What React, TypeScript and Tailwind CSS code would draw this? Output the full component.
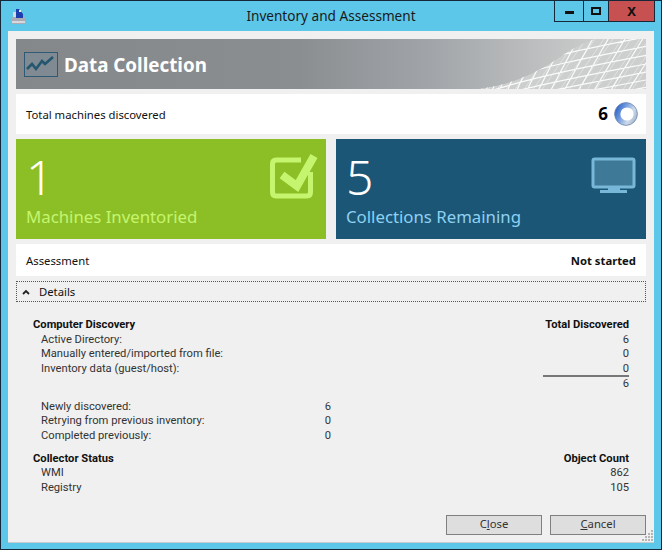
const font = "font-['Noto_Sans','Open_Sans',sans-serif]";

function BannerMesh() {
  // wire mesh in the banner's right corner, coordinates are banner-local
  const edge = "M0 50 C30 46 52 36 72 24 C88 13 100 5 116 0 L167 0 L167 50 Z";
  const thick: string[] = [];
  const thin: string[] = [];
  // rows flatten out toward the right
  for (let i = 0; i < 7; i++) {
    const y = 2 + i * 9.6 - i * i * 0.2;
    thick.push(`M10 ${y + 36 - i * 2} C60 ${y + 16} 120 ${y + 5} 167 ${y - 4}`);
  }
  // columns lean right and spread apart
  let x = 2;
  for (let i = 0; i < 15; i++) {
    thick.push(`M${x} 52 L${x + 18 + i * 1.2} 0`);
    x += 5 + i * 1.05;
  }
  for (let i = 0; i < 22; i++) {
    thin.push(`M${i * 9 - 10} 52 L${i * 9 + 26} 0`);
  }
  return (
    <svg width="167" height="50" viewBox="0 0 167 50" className="absolute right-0 top-0">
      <defs>
        <clipPath id="mesh">
          <path d={edge} />
        </clipPath>
      </defs>
      <g clipPath="url(#mesh)">
        <path d={edge} fill="#cdcece" />
        <path d={thin.join(" ")} fill="none" stroke="#e8e8e8" strokeWidth="0.7" />
        <path d={thick.join(" ")} fill="none" stroke="#fafafa" strokeWidth="1.2" />
      </g>
    </svg>
  );
}

function ChartIcon() {
  return (
    <svg width="34" height="25" viewBox="0 0 34 25" className="shrink-0">
      <rect x="0.5" y="0.5" width="33" height="24" fill="#7f8a92" stroke="#2f5a75" />
      <path d="M3 17 L8 12 L12 17 L18 9 L21 12 L29 5" fill="none" stroke="#24566f" strokeWidth="2.6" />
    </svg>
  );
}

function Ring() {
  return (
    <svg width="24" height="24" viewBox="0 0 24 24">
      <defs>
        <linearGradient id="ring" x1="0" y1="0.1" x2="1" y2="0.6">
          <stop offset="0" stopColor="#1c50bd" />
          <stop offset="0.4" stopColor="#6f9ade" />
          <stop offset="0.75" stopColor="#cfdbea" />
          <stop offset="1" stopColor="#a9b9cf" />
        </linearGradient>
      </defs>
      <circle cx="12" cy="12" r="11.4" fill="url(#ring)" stroke="#6f86ad" strokeWidth="0.8" />
      <circle cx="13" cy="12" r="6.6" fill="#ffffff" />
    </svg>
  );
}

function Row({ label, mid, right, bold }: { label: string; mid?: string; right?: string; bold?: boolean }) {
  return (
    <div className={`flex h-[14.6px] items-center ${bold ? "font-bold text-[#111]" : "pl-2 text-[#333]"}`}>
      <div className="flex w-[290px] shrink-0 justify-between whitespace-nowrap">
        <span>{label}</span>
        {mid && <span>{mid}</span>}
      </div>
      {right && <span className="ml-auto whitespace-nowrap">{right}</span>}
    </div>
  );
}

function Grip() {
  const dots = [
    [10, 0],
    [7, 3],
    [10, 3],
    [4, 6],
    [7, 6],
    [10, 6],
    [1, 9],
    [4, 9],
    [7, 9],
    [10, 9],
  ];
  return (
    <svg width="12" height="11" viewBox="0 0 12 11" className="absolute bottom-[1px] right-[1px]">
      {dots.map(([x, y]) => (
        <rect key={`${x}-${y}`} x={x} y={y} width="2" height="2" fill="#b4b4b4" />
      ))}
    </svg>
  );
}

export default function App() {
  return (
    <div className={`${font} flex h-[550px] w-[662px] flex-col border border-[#15283a] bg-[#5cc7e8] text-[11.3px] text-[#111]`}>
      <div className="grid h-[30px] shrink-0 grid-cols-[1fr_auto_1fr]">
        <div className="pl-[9px] pt-[7px]">
          <svg width="17" height="17" viewBox="0 0 17 17">
            <rect x="2" y="9" width="13" height="7" rx="1" fill="#a9acb4" />
            <rect x="2" y="13" width="13" height="2" fill="#d8d8dc" />
            <path d="M6 1 L9 1 L13 6 L13 10 L6 10 Z" fill="#1d3fae" />
            <rect x="3" y="4" width="3" height="5" fill="#d5d9e2" />
            <rect x="9" y="2" width="2" height="2" fill="#e9edf5" />
          </svg>
        </div>
        <div className="pt-[5px] text-[13.6px] leading-[20px] text-[#1a1a1a]">Inventory and Assessment</div>
        <div className="flex justify-end pr-[6px]">
          <div className="flex h-[21px] w-[30px] items-center justify-center border-x border-b border-[#15283a]">
            <div className="mt-[3px] h-[3px] w-[9px] bg-[#111]" />
          </div>
          <div className="flex h-[21px] w-[25px] items-center justify-center border-r border-b border-[#15283a]">
            <div className="h-[8px] w-[10px] border-2 border-[#111]" />
          </div>
          <div className="flex h-[21px] w-[46px] items-center justify-center border-r border-b border-[#15283a] bg-[#c75050] text-[13px] font-bold leading-none text-[#111]">
            X
          </div>
        </div>
      </div>

      <div className="relative mx-[7px] flex flex-1 flex-col border-b border-[#c8ccd0] bg-[#f0f0f0] px-2 pt-2 pb-[7px]">
        <div className="relative flex h-[50px] shrink-0 items-center gap-[6px] bg-[linear-gradient(90deg,#85888b_0%,#8b8e91_45%,#a0a4a8_65%,#b0b3b5_75%,#c8c9c9_90%,#d4d5d5_100%)] pl-2">
          <ChartIcon />
          <span className="mt-[2px] text-[18.8px] font-bold text-white">Data Collection</span>
          <BannerMesh />
        </div>

        <div className="mt-[5px] flex h-[40px] shrink-0 items-center justify-between bg-white pl-[10px] pr-[8px]">
          <span className="mt-[2px]">Total machines discovered</span>
          <span className="flex items-center gap-[6px]">
            <span className="text-[17px] font-bold text-black">6</span>
            <Ring />
          </span>
        </div>

        <div className="mt-[5px] grid h-[100px] shrink-0 grid-cols-[310px_310px] justify-between">
          <div className="relative bg-[#8cbf26] pl-[10px]">
            <div className="pt-[8px] text-[48px] font-light leading-[60px] text-white">1</div>
            <div className="text-[16.8px] leading-[20px] text-[#c5f56f]">Machines Inventoried</div>
            <svg width="50" height="50" viewBox="0 0 50 50" className="absolute right-[8px] top-[11px]">
              <path
                d="M33 10 H8 Q4.5 10 4.5 14 V42 Q4.5 46 8 46 H39 Q42.5 46 42.5 42 V22"
                fill="none"
                stroke="#c5f56f"
                strokeWidth="5"
              />
              <path d="M14 25 L29 36 L46 6" fill="none" stroke="#c5f56f" strokeWidth="8" />
            </svg>
          </div>
          <div className="relative bg-[#1b5676] pl-[10px]">
            <div className="pt-[8px] text-[48px] font-light leading-[60px] text-white">5</div>
            <div className="text-[16.8px] leading-[20px] text-[#8ed1f1]">Collections Remaining</div>
            <svg width="45" height="37" viewBox="0 0 45 37" className="absolute right-[10px] top-[18px]">
              <rect x="2" y="2" width="41" height="28" rx="1.5" fill="#3f7998" stroke="#78b7d8" strokeWidth="3" />
              <path d="M17 31 H29 V33 H36 V36 H9 V33 H17 Z" fill="#78b7d8" />
            </svg>
          </div>
        </div>

        <div className="mt-[5px] flex h-[32px] shrink-0 items-center justify-between bg-white px-[10px] pt-[2px]">
          <span>Assessment</span>
          <span className="font-bold">Not started</span>
        </div>

        <div className="mt-[5px] flex h-[21px] shrink-0 items-center gap-[9px] border border-dotted border-[#555] pl-[5px] pt-[1px]">
          <svg width="8" height="6" viewBox="0 0 8 6">
            <path d="M1 5 L4 2 L7 5" fill="none" stroke="#222" strokeWidth="1.8" />
          </svg>
          <span>Details</span>
        </div>

        <div className="flex flex-1 flex-col px-[17px] pt-[16px] font-['Roboto',sans-serif] text-[11.2px]">
          <Row label="Computer Discovery" right="Total Discovered" bold />
          <Row label="Active Directory:" right="6" />
          <Row label="Manually entered/imported from file:" right="0" />
          <Row label="Inventory data (guest/host):" right="0" />
          <div className="-mt-[1px] ml-auto h-[2px] w-[86px] bg-[#777]" />
          <Row label="" right="6" />
          <div className="mt-[8px]">
            <Row label="Newly discovered:" mid="6" />
            <Row label="Retrying from previous inventory:" mid="0" />
            <Row label="Completed previously:" mid="0" />
          </div>
          <div className="mt-[8px]">
            <Row label="Collector Status" right="Object Count" bold />
            <Row label="WMI" right="862" />
            <Row label="Registry" right="105" />
          </div>
          <div className={`${font} -mx-[17px] mt-auto flex justify-end gap-2 text-[11.3px]`}>
            <button className="h-[20px] w-[96px] border border-[#808080] bg-[#dedede] pb-[1px] text-[#333]">
              C<u>l</u>ose
            </button>
            <button className="h-[20px] w-[96px] border border-[#808080] bg-[#dedede] pb-[1px] text-[#333]">
              <u>C</u>ancel
            </button>
          </div>
        </div>
        <Grip />
      </div>
      <div className="h-[6px] shrink-0" />
    </div>
  );
}
